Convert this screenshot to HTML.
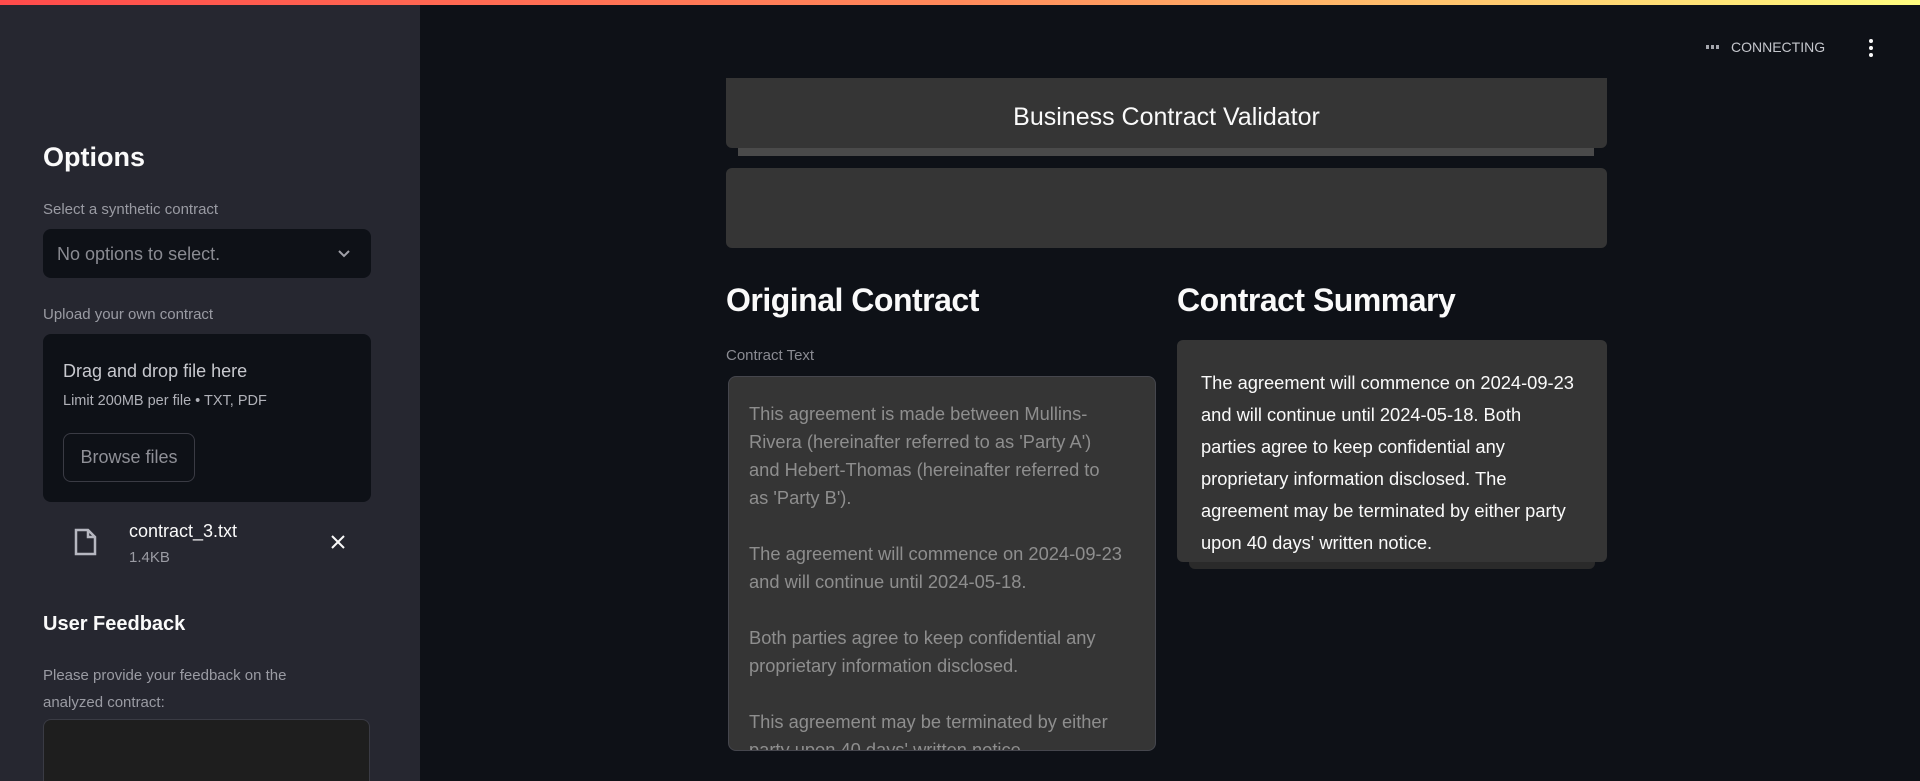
<!DOCTYPE html>
<html style="overflow:hidden;height:781px"><head><meta charset="utf-8"><style>
*{margin:0;padding:0;box-sizing:border-box}
body{width:1920px;height:781px;overflow:hidden;background:#0e1117;font-family:"Liberation Sans",sans-serif;position:relative}
.a{position:absolute;white-space:nowrap}
</style></head><body>
<div class="a" style="left:0;top:0;width:1920px;height:5px;background:linear-gradient(90deg,#ff4b4b,#ff8a5b 50%,#fffd80)"></div>
<div class="a" style="left:0;top:5px;width:420px;height:776px;background:#262730"></div>
<div class="a" style="left:43px;top:142px;font-size:27px;font-weight:bold;color:#fafafa">Options</div>
<div class="a" style="left:43px;top:201px;font-size:15px;color:#9a9ba3">Select a synthetic contract</div>
<div class="a" style="left:43px;top:229px;width:328px;height:49px;background:#0e1117;border-radius:8px"></div>
<div class="a" style="left:57px;top:244px;font-size:18px;color:#8a8b92">No options to select.</div>
<svg class="a" style="left:336px;top:248px" width="16" height="12" viewBox="0 0 16 12"><path d="M3 3l5 5 5-5" stroke="#a0a0a8" stroke-width="2" fill="none"/></svg>
<div class="a" style="left:43px;top:306px;font-size:15px;color:#9a9ba3">Upload your own contract</div>
<div class="a" style="left:43px;top:334px;width:328px;height:168px;background:#0e1117;border-radius:8px"></div>
<div class="a" style="left:63px;top:361px;font-size:18px;color:#c8c9cf">Drag and drop file here</div>
<div class="a" style="left:63px;top:393px;font-size:14.5px;color:#b0b1b8">Limit 200MB per file • TXT, PDF</div>
<div class="a" style="left:63px;top:433px;width:132px;height:49px;border:1px solid #3a3b44;border-radius:8px;font-size:18px;color:#8f9097;line-height:47px;text-align:center">Browse files</div>
<svg class="a" style="left:72px;top:527px" width="28" height="30" viewBox="0 0 28 30"><path d="M4 3h12l7 7v17H4z" stroke="#b6b7c0" stroke-width="2.5" fill="none"/><path d="M16 3v7h7" stroke="#b6b7c0" stroke-width="2.5" fill="none"/></svg>
<div class="a" style="left:129px;top:521px;font-size:18px;color:#fafafa">contract_3.txt</div>
<div class="a" style="left:129px;top:549px;font-size:15px;color:#9a9ba3">1.4KB</div>
<svg class="a" style="left:329px;top:533px" width="18" height="18" viewBox="0 0 18 18"><path d="M3 3l12 12M15 3L3 15" stroke="#fafafa" stroke-width="2"/></svg>
<div class="a" style="left:43px;top:613px;font-size:20px;font-weight:bold;color:#fafafa">User Feedback</div>
<div class="a" style="left:43px;top:662px;font-size:15px;color:#9a9ba3;line-height:27px">Please provide your feedback on the<br>analyzed contract:</div>
<div class="a" style="left:43px;top:719px;width:327px;height:62px;background:#1e1e1e;border:1px solid #3a3b44;border-bottom:none;border-radius:8px 8px 0 0"></div>

<svg class="a" style="left:1706px;top:44px" width="18" height="6"><rect x="0" y="1" width="3" height="4" fill="#a5a7ae"/><rect x="5" y="1" width="3" height="4" fill="#a5a7ae"/><rect x="10" y="1" width="3" height="4" fill="#a5a7ae"/></svg>
<div class="a" style="left:1731px;top:39px;font-size:14px;color:#c4c6cc">CONNECTING</div>
<svg class="a" style="left:1867px;top:38px" width="8" height="20"><circle cx="4" cy="3" r="2" fill="#fafafa"/><circle cx="4" cy="10" r="2" fill="#fafafa"/><circle cx="4" cy="17" r="2" fill="#fafafa"/></svg>

<div class="a" style="left:738px;top:146px;width:856px;height:10px;background:#4a4a4a"></div>
<div class="a" style="left:726px;top:78px;width:881px;height:70px;background:#353535;border-radius:0 0 6px 6px"></div>
<div class="a" style="left:726px;top:103px;width:881px;text-align:center;font-size:25px;color:#fafafa">Business Contract Validator</div>
<div class="a" style="left:726px;top:168px;width:881px;height:80px;background:#353535;border-radius:6px"></div>

<div class="a" style="left:726px;top:282px;font-size:32px;font-weight:bold;color:#fafafa;letter-spacing:-0.5px">Original Contract</div>
<div class="a" style="left:1177px;top:282px;font-size:32px;font-weight:bold;color:#fafafa;letter-spacing:-0.5px">Contract Summary</div>
<div class="a" style="left:726px;top:347px;font-size:15px;color:#8a8b92">Contract Text</div>
<div class="a" style="left:728px;top:376px;width:428px;height:375px;background:#353535;border:1px solid #45464d;border-radius:8px;overflow:hidden">
<div style="position:absolute;left:20px;top:23px;font-size:18.3px;line-height:28px;color:#8e8e8e;white-space:nowrap">This agreement is made between Mullins-<br>Rivera (hereinafter referred to as 'Party A')<br>and Hebert-Thomas (hereinafter referred to<br>as 'Party B').<br><br>The agreement will commence on 2024-09-23<br>and will continue until 2024-05-18.<br><br>Both parties agree to keep confidential any<br>proprietary information disclosed.<br><br>This agreement may be terminated by either<br>party upon 40 days' written notice.</div>
</div>
<div class="a" style="left:1189px;top:555px;width:406px;height:14px;background:#2a2a2a;border-radius:0 0 6px 6px"></div>
<div class="a" style="left:1177px;top:340px;width:430px;height:222px;background:#353535;border-radius:6px"></div>
<div class="a" style="left:1201px;top:367px;font-size:18.3px;line-height:32px;color:#fafafa">The agreement will commence on 2024-09-23<br>and will continue until 2024-05-18. Both<br>parties agree to keep confidential any<br>proprietary information disclosed. The<br>agreement may be terminated by either party<br>upon 40 days' written notice.</div>
</body></html>
